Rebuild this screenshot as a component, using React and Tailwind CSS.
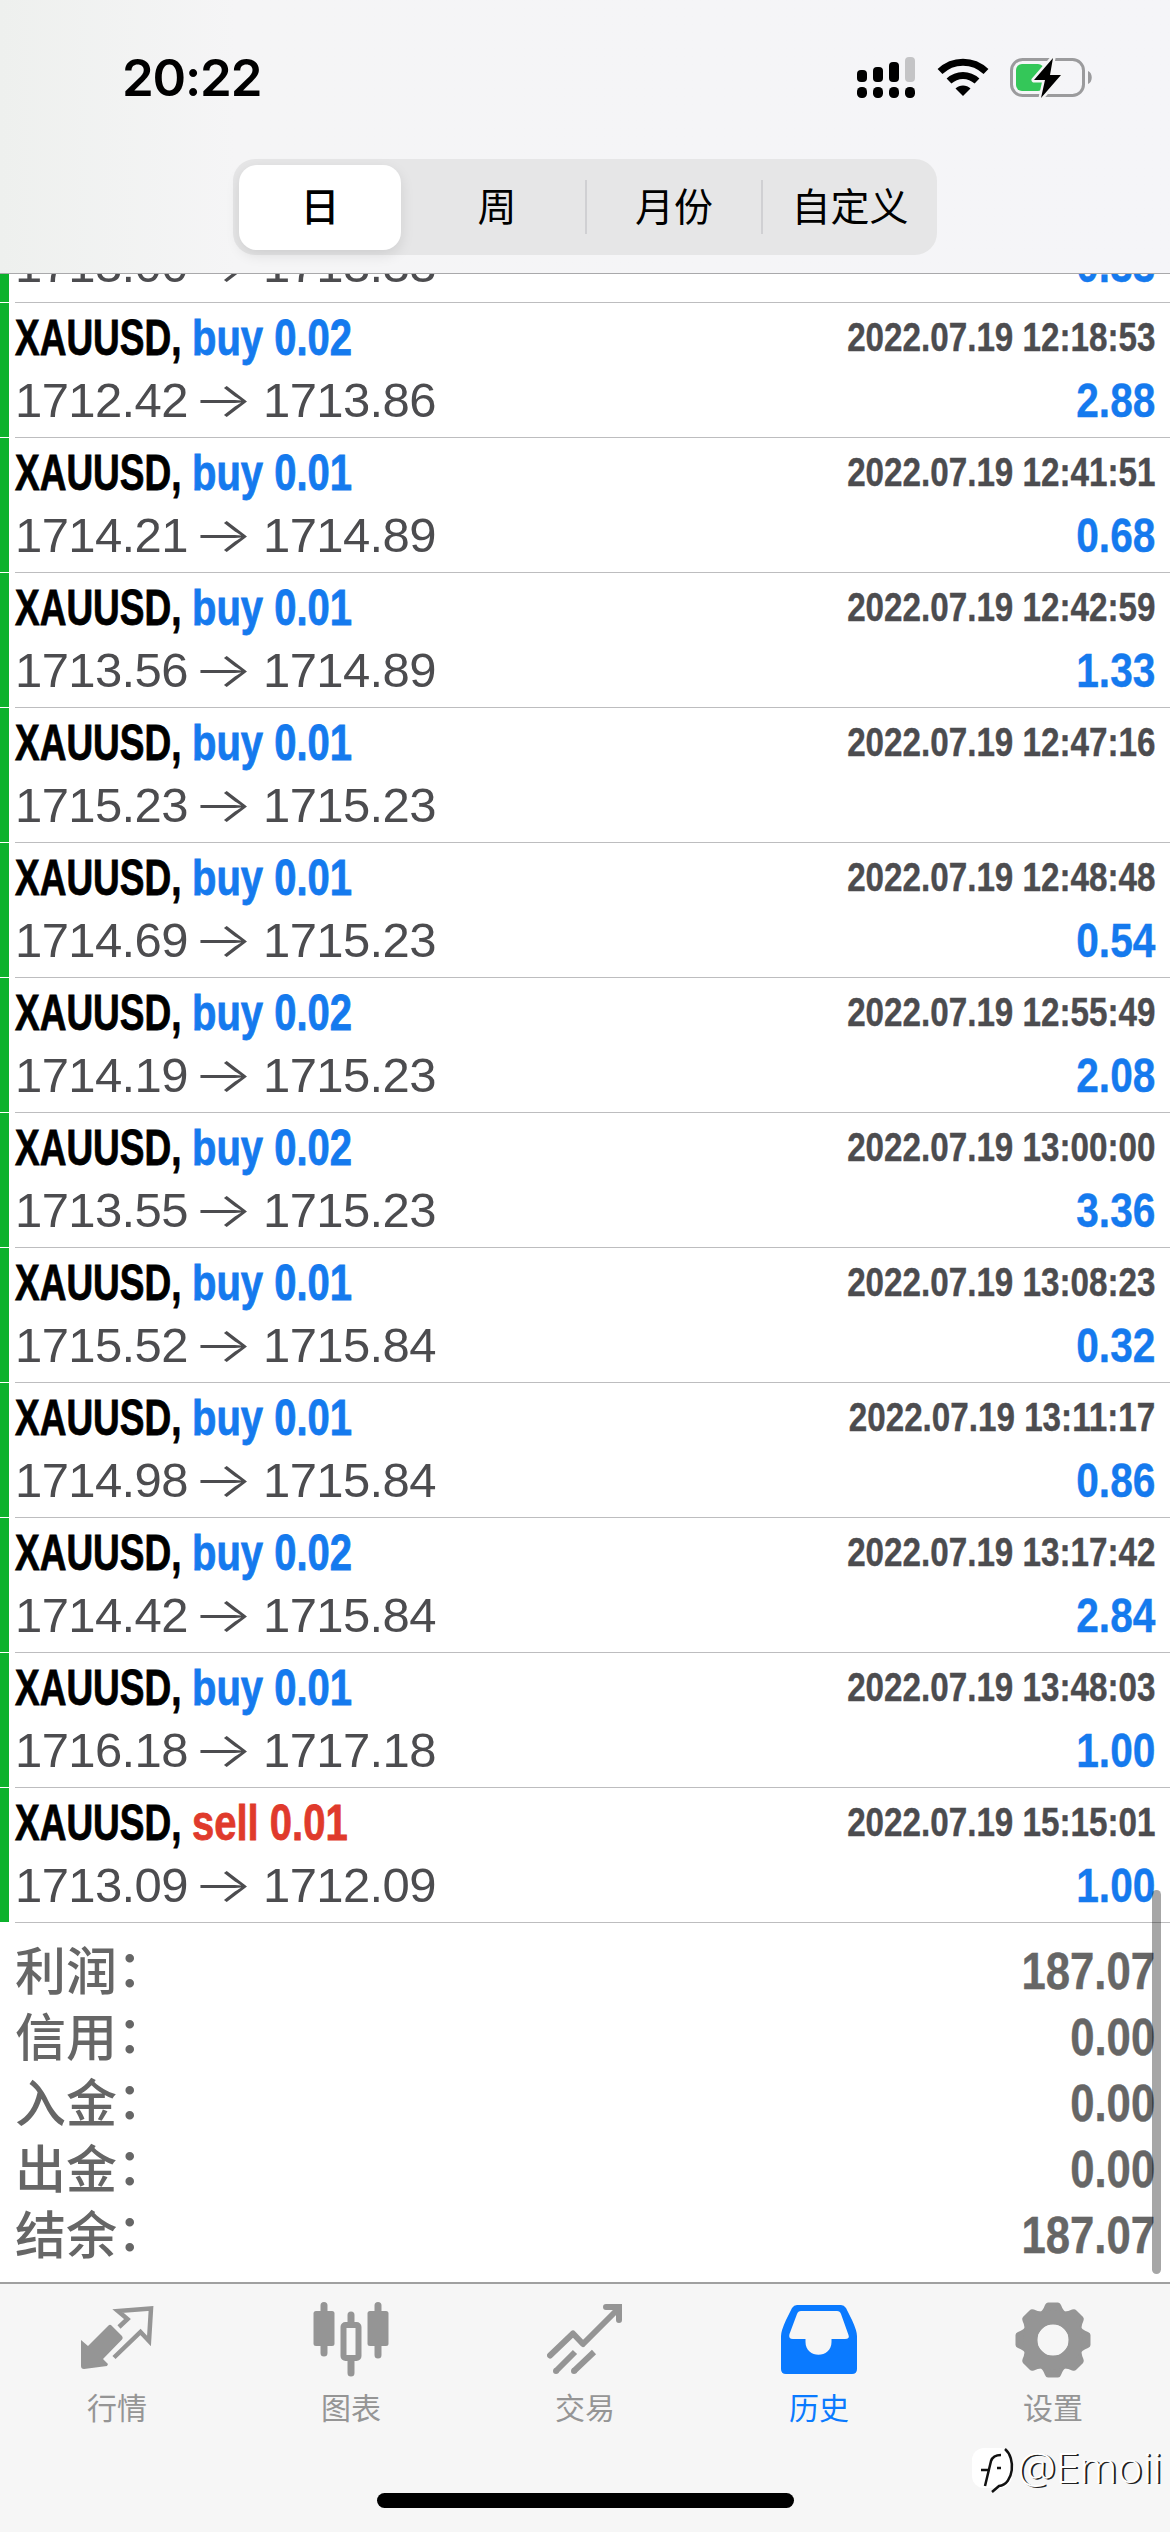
import React from 'react';

// The first deal is scrolled under the header, only its price line shows
const deals = [
  { id: 1, open: '1713.00', close: '1713.33', profit: '0.33' },
  { id: 2, side: 'buy', volume: '0.02', open: '1712.42', close: '1713.86', time: '2022.07.19 12:18:53', profit: '2.88' },
  { id: 3, side: 'buy', volume: '0.01', open: '1714.21', close: '1714.89', time: '2022.07.19 12:41:51', profit: '0.68' },
  { id: 4, side: 'buy', volume: '0.01', open: '1713.56', close: '1714.89', time: '2022.07.19 12:42:59', profit: '1.33' },
  { id: 5, side: 'buy', volume: '0.01', open: '1715.23', close: '1715.23', time: '2022.07.19 12:47:16', profit: '' },
  { id: 6, side: 'buy', volume: '0.01', open: '1714.69', close: '1715.23', time: '2022.07.19 12:48:48', profit: '0.54' },
  { id: 7, side: 'buy', volume: '0.02', open: '1714.19', close: '1715.23', time: '2022.07.19 12:55:49', profit: '2.08' },
  { id: 8, side: 'buy', volume: '0.02', open: '1713.55', close: '1715.23', time: '2022.07.19 13:00:00', profit: '3.36' },
  { id: 9, side: 'buy', volume: '0.01', open: '1715.52', close: '1715.84', time: '2022.07.19 13:08:23', profit: '0.32' },
  { id: 10, side: 'buy', volume: '0.01', open: '1714.98', close: '1715.84', time: '2022.07.19 13:11:17', profit: '0.86' },
  { id: 11, side: 'buy', volume: '0.02', open: '1714.42', close: '1715.84', time: '2022.07.19 13:17:42', profit: '2.84' },
  { id: 12, side: 'buy', volume: '0.01', open: '1716.18', close: '1717.18', time: '2022.07.19 13:48:03', profit: '1.00' },
  { id: 13, side: 'sell', volume: '0.01', open: '1713.09', close: '1712.09', time: '2022.07.19 15:15:01', profit: '1.00' },
];

const totals = [
  { label: '利润', value: '187.07' },
  { label: '信用', value: '0.00' },
  { label: '入金', value: '0.00' },
  { label: '出金', value: '0.00' },
  { label: '结余', value: '187.07' },
];

const QuotesIcon = () => (
  <svg className="w-[76px] h-[76px]" viewBox="0 0 76 76" fill="none">
    <path d="M2 38L9 44L29.5 23.5Q31 22 32.5 23.5L43 34Q44.5 36 43 37.5L24 57L29 62L28 64L5 67Q2 67 2 64Z" fill="currentColor" />
    <path d="M40 25L48.500 17L39 9L72 6.500L70 39L61.500 30L35 55.500" stroke="currentColor" strokeWidth="4.500" />
  </svg>
);

const ChartIcon = () => (
  <svg className="w-[76px] h-[76px]" viewBox="0 0 76 76" fill="none">
    <path d="M11 3.500V51M65 3.500V53M38 13V22M38 55V71" stroke="currentColor" strokeWidth="7" strokeLinecap="round" />
    <rect x="0.500" y="9" width="21" height="35" rx="2.500" fill="currentColor" />
    <rect x="54.500" y="9" width="21" height="35" rx="2.500" fill="currentColor" />
    <rect x="30.500" y="23" width="15" height="33" rx="2" fill="#f6f6f6" stroke="currentColor" strokeWidth="6" />
  </svg>
);

const TradeIcon = () => (
  <svg className="w-[76px] h-[76px]" viewBox="0 0 76 76" fill="none" stroke="currentColor" strokeWidth="6">
    <path d="M3 53.500L26 31.500L36 42L71 7" strokeLinecap="round" strokeLinejoin="round" />
    <path d="M59 5H72V18" strokeLinecap="round" />
    <path d="M9 69L28 50M27 69L47 50" />
    <g fill="currentColor" stroke="none">
      <circle cx="9" cy="69" r="3" />
      <circle cx="27" cy="69" r="3" />
    </g>
  </svg>
);

const HistoryIcon = () => (
  <svg className="w-[76px] h-[76px]" viewBox="0 0 76 76">
    <path
      fillRule="evenodd"
      fill="currentColor"
      d="M16 3H60Q63 3 65 6L71 18Q76 29 76 34V67Q76 72 71 72H5Q0 72 0 67V34Q0 29 5 18L11 6Q13 3 16 3ZM20 9Q17 9 16 12L8.500 32Q7 37 12 37H24.500V40C24.500 57 50.500 57 50.500 40V37H64Q69 37 67.500 33L60 12Q59 9 56 9Z"
    />
  </svg>
);

const SettingsIcon = () => (
  <svg className="w-[76px] h-[76px]" viewBox="-38 -38 76 76">
    <g fill="currentColor">
      {[0, 45, 90, 135, 180, 225, 270, 315].map((angle) => (
        <path key={angle} transform={`rotate(${angle})`} d="M-15 -26Q-10 -29 -8 -35Q-7 -37.500 -5 -37.500H5Q7 -37.500 8 -35Q10 -29 15 -26V-15H-15Z" />
      ))}
    </g>
    <circle r="22.500" fill="none" stroke="currentColor" strokeWidth="14" />
    <circle r="15.500" fill="#f6f6f6" />
  </svg>
);

const tabs = [
  { label: '行情', icon: QuotesIcon },
  { label: '图表', icon: ChartIcon },
  { label: '交易', icon: TradeIcon },
  { label: '历史', icon: HistoryIcon, active: true },
  { label: '设置', icon: SettingsIcon },
];

const StatusBar = () => (
  <div className="flex h-[159px] items-start justify-between pl-[122px] pr-[77px]">
    <span className="mt-[46px] font-['Inter'] text-[51px] leading-[64px] font-semibold tracking-[-1.2px] text-black">20:22</span>
    <div className="mt-[56px] flex items-center">
      <svg className="h-[44px] w-[60px]" viewBox="0 0 60 44">
        <rect x="0" y="14" width="10" height="12" rx="4" />
        <rect x="16" y="11" width="10" height="15" rx="4" />
        <rect x="32" y="6" width="10" height="20" rx="4" />
        <rect x="48" y="1" width="10" height="25" rx="4" fill="#c4c4c6" />
        <rect x="0" y="31" width="10" height="11" rx="4.500" />
        <rect x="16" y="31" width="10" height="11" rx="4.500" />
        <rect x="32" y="31" width="10" height="11" rx="4.500" />
        <rect x="48" y="31" width="10" height="11" rx="4.500" />
      </svg>
      <svg className="ml-[20px] h-[44px] w-[52px]" viewBox="0 0 52 44">
        <path d="M3 15.500C16 3 36 3 49 15.500" fill="none" stroke="#000" strokeWidth="7" />
        <path d="M12 25C20 17.500 32 17.500 40 25" fill="none" stroke="#000" strokeWidth="7" />
        <path d="M26 40L18.500 32.500C22.500 28.500 29.500 28.500 33.500 32.500Z" />
      </svg>
      <svg className="ml-[21px] h-[44px] w-[83px]" viewBox="0 0 83 44">
        <rect x="1.500" y="3.500" width="72" height="36" rx="11" fill="none" stroke="#9b9b9d" strokeWidth="3" />
        <path d="M78 15C83 17 83 26 78 28Z" fill="#9b9b9d" />
        <rect x="6" y="8" width="28" height="27" rx="6" fill="#34c759" />
        <path d="M43 2L24 24H35L31 42L51 19H40Z" fill="#000" stroke="#f5f5f6" strokeWidth="5" paintOrder="stroke" strokeLinejoin="round" />
      </svg>
    </div>
  </div>
);

const PeriodTabs = () => (
  <div className="mx-auto flex h-24 w-[704px] items-center rounded-[22px] bg-[#e6e6e7] text-[39px] leading-[58px] text-black">
    <div className="flex w-[176px] pl-1.5">
      <div className="flex h-[85px] w-[162px] items-center justify-center rounded-[18px] bg-white pb-1.5 font-medium shadow-[0_5px_14px_rgba(0,0,0,0.1)]">
        日
      </div>
    </div>
    <div className="w-[176px] pb-1.5 text-center">周</div>
    <div className="flex h-[54px] w-[176px] items-center justify-center border-l-2 border-[#d0d0d3] pb-1.5">月份</div>
    <div className="flex h-[54px] w-[176px] items-center justify-center border-l-2 border-[#d0d0d3] pb-1.5">自定义</div>
  </div>
);

const DealRow = ({ deal }) => (
  <div className="flex h-[135px] shrink-0 font-['Liberation_Sans','Noto_Sans_CJK_SC',sans-serif]">
    <div className="mb-px w-[9px] bg-[#0cb22c]" />
    <div className="ml-1.5 flex flex-1 flex-col border-b border-[#bdbdbf] pr-[15px] whitespace-nowrap">
      <div className="flex h-[68px] items-start justify-between pt-1.5 font-bold">
        {deal.time && (
          <>
            <div className="flex text-[50px] leading-[58px] [-webkit-text-stroke:0.8px_currentColor]">
              <span className="w-[177px] origin-left scale-x-[0.74] text-black">XAUUSD,</span>
              <span className={`origin-left scale-x-[0.8] ${deal.side === 'buy' ? 'text-[#157aee]' : 'text-[#e03a2c]'}`}>
                {deal.side} {deal.volume}
              </span>
            </div>
            <span className="origin-right scale-x-[0.83] text-[40px] leading-[56px] text-[#4c4c4f] [-webkit-text-stroke:0.4px_currentColor]">
              {deal.time}
            </span>
          </>
        )}
      </div>
      <div className="flex h-[66px] items-start justify-between text-[49px] leading-[58px]">
        <div className="flex text-[#4c4c4f] tracking-[-0.6px]">
          <span className="w-[184px]">{deal.open}</span>
          <span className="w-[64px] origin-[22px_50%] scale-x-130 font-['Inter'] font-light">→</span>
          <span>{deal.close}</span>
        </div>
        <span className="origin-right scale-x-[0.83] font-bold text-[#157aee] [-webkit-text-stroke:0.4px_currentColor]">{deal.profit}</span>
      </div>
    </div>
  </div>
);

const Totals = () => (
  <div className="flex flex-1 flex-col pt-[15px] pr-[15px] pl-[15px]">
    {totals.map((row) => (
      <div key={row.label} className="flex h-[66px] items-start justify-between text-[51px] leading-[66px] text-[#666666]">
        <span className="-mt-[3px] flex font-medium">
          <span>{row.label}</span>
          <span className="-mt-[3px]">：</span>
        </span>
        <span className="origin-right scale-x-[0.84] font-['Liberation_Sans'] text-[52px] font-bold [-webkit-text-stroke:0.4px_currentColor]">
          {row.value}
        </span>
      </div>
    ))}
  </div>
);

const TabBar = () => (
  <div className="flex h-[250px] flex-col border-t-2 border-[#a0a0a0] bg-[#f6f6f6]">
    <div className="flex">
      {tabs.map((tab) => (
        <div
          key={tab.label}
          className={`flex w-[234px] flex-col items-center pt-[18px] ${tab.active ? 'text-[#0a7aff]' : 'text-[#959595]'}`}
        >
          <tab.icon />
          <span className="mt-1.5 text-[30px] leading-[44px]">{tab.label}</span>
        </div>
      ))}
    </div>
  </div>
);

const Watermark = () => (
  <div className="absolute right-[8px] bottom-[38px] flex items-center">
    <svg className="h-[48px] w-[46px]" viewBox="0 0 46 48">
      <rect x="0" y="2" width="40" height="40" rx="12" fill="#fff" />
      <path d="M33 3C44 12 42 38 27 40L20 46" fill="none" stroke="#111" strokeWidth="2.500" />
      <path d="M13 40L19 15Q21 9 29 9M9 24H18M25 22H29" fill="none" stroke="#111" strokeWidth="2.500" />
    </svg>
    <span className="-mt-1.5 font-['Open_Sans'] text-[43px] leading-[48px] font-light text-white [text-shadow:2px_1px_0_#222]">@Emoii</span>
  </div>
);

const App = () => {
  return (
    <div className="relative flex h-[2532px] w-[1170px] flex-col overflow-hidden bg-white font-['Noto_Sans_CJK_SC',sans-serif]">
      {/* Header */}
      <div className="h-[274px] shrink-0 border-b border-[#a9a9ab] bg-linear-to-r from-[#eef0ee] via-[#f5f5f6] via-20% to-[#f5f5f8]">
        <StatusBar />
        <PeriodTabs />
      </div>

      {/* History list */}
      <div className="flex h-[1649px] shrink-0 flex-col justify-end overflow-hidden">
        {deals.map((deal) => (
          <DealRow key={deal.id} deal={deal} />
        ))}
      </div>
      <Totals />
      <TabBar />

      {/* Scroll thumb */}
      <div className="absolute top-[1890px] right-[9px] h-[384px] w-[9px] rounded-full bg-black/35" />
      {/* Home indicator */}
      <div className="absolute bottom-[24px] left-[377px] h-[15px] w-[417px] rounded-full bg-black" />
      <Watermark />
    </div>
  );
};

export default App;
